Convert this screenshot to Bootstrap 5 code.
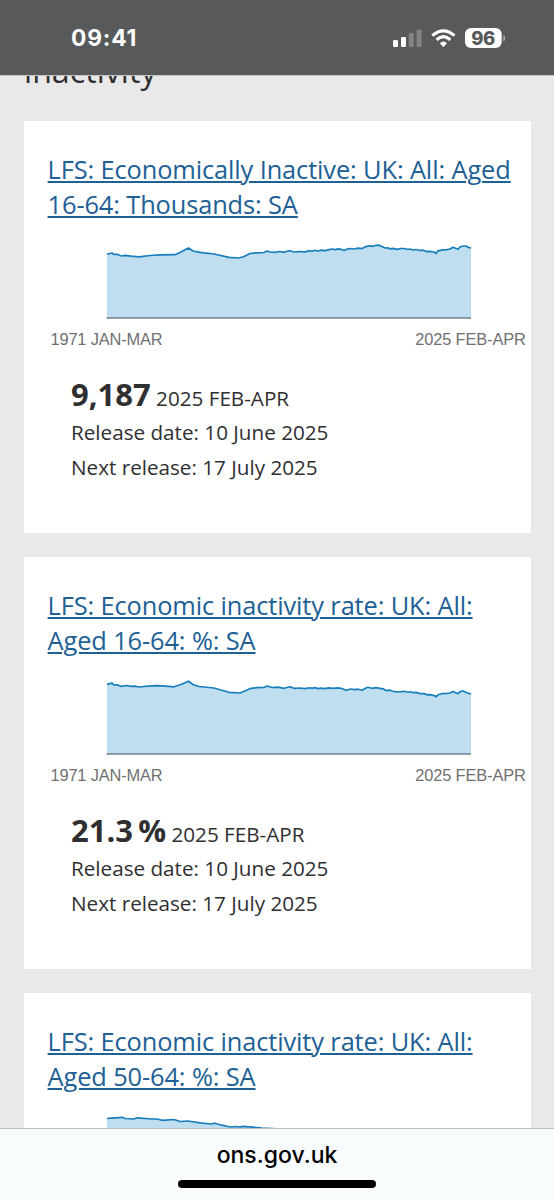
<!DOCTYPE html>
<html lang="en">
<head>
<meta charset="utf-8">
<meta name="viewport" content="width=device-width, initial-scale=1">
<title>ons.gov.uk</title>
<link href="https://cdn.jsdelivr.net/npm/bootstrap@5.3.0/dist/css/bootstrap.min.css" rel="stylesheet">
<style>
  body { background: #e9e9e9; color: #2f2f31; font-family: "Open Sans", "Noto Sans", sans-serif; }
  .status-bar { height: 75px; background: #58595b; padding: 0 49px 0 71px; font-family: Inter, sans-serif; }
  .clock { font-size: 22.8px; font-weight: 700; line-height: 75px; letter-spacing: .8px; }
  .page { border-top: 1px solid #c4c4c5; padding: 0 24px; min-height: 0; }
  .section-title { font-size: 32.2px; line-height: 40px; margin: -25px 0 30px; }
  .stat-card { height: 411.5px; margin: 0 -.5px 24.5px 0; padding-top: 31px; background: #fff; flex: none; }
  .stat-card h3 { font-size: 25.4px; letter-spacing: -.12px; line-height: 35px; padding: 0 10px 0 23.6px; margin: 0; font-weight: 400; }
  .stat-card a { color: #206095; text-decoration-thickness: 1.5px; text-underline-offset: 2px; }
  .stat-card svg { display: block; margin-top: 3px; }
  .axis-label { font: 16.4px "Liberation Sans", sans-serif; fill: #707071; }
  .facts { font-size: 20.66px; line-height: 35.3px; padding: 22px 0 0 47px; margin: 0; }
  .facts li:first-child { height: 38px; }
  .figure-value { font-size: 31px; font-weight: 700; }
  .browser-bar { height: 72px; background: #f8fcfd; border-top: 1px solid #b9bfc2; font-family: Inter, sans-serif; color: #000; }
  .address { font-size: 23px; font-weight: 500; line-height: 30px; margin-top: 11px; }
  .home-indicator { width: 198px; height: 8px; margin-top: 10px; background: #000; }
</style>
</head>
<body class="vh-100 overflow-hidden d-flex flex-column">
<header class="status-bar d-flex align-items-center justify-content-between text-white flex-shrink-0">
  <div class="clock">09:41</div>
  <svg width="113" height="24" viewBox="392 25 113 24" aria-hidden="true">
    <g fill="#fff">
      <rect x="393" y="39" width="5" height="7" rx="1.2"/>
      <rect x="401" y="36" width="5" height="10" rx="1.2"/>
      <g opacity=".25"><rect x="408.700" y="32" width="5" height="14" rx="1.2"/><rect x="416.600" y="28.500" width="5" height="17.500" rx="1.2"/></g>
      <path d="M440.200 42.200Q443.400 39.400 446.600 42.200L443.400 45.900Z" stroke="#fff" stroke-width=".5" stroke-linejoin="round"/>
      <rect x="465" y="27" width="36.700" height="20" rx="6"/>
      <path d="M503.300 34v6.600q2.100-1 2.100-3.300t-2.100-3.300Z" opacity=".5"/>
    </g>
    <g fill="none" stroke="#fff" stroke-width="3.200">
      <path d="M432.300 34.600Q443.400 25.200 454.500 34.600"/>
      <path d="M436.500 38.800Q443.400 32.600 450.300 38.800"/>
    </g>
    <text x="483.300" y="43.700" text-anchor="middle" font-family="Inter, sans-serif" font-size="18.500" font-weight="800" fill="#58595b" textLength="24">96</text>
  </svg>
</header>

<main class="page flex-grow-1 overflow-hidden d-flex flex-column">
  <h2 class="section-title flex-shrink-0 fw-normal">inactivity</h2>

  <article class="stat-card">
    <h3><a href="#">LFS: Economically Inactive: UK: All: Aged 16-64: Thousands: SA</a></h3>
    <svg width="506" height="130" viewBox="24 225 506 130" role="img">
      <path fill="#bfdeef" d="M107 318V254.300L112 253 114 254.500 117 254.200 121 256 125 255.300 131 256.200 139 256.800 150 255.500 160 254.800 175 254.700 180 252.500 188.500 248 193 251 200 252.300 214 254 229 257.300 239 258 244 256.500 250 253.500 264 252.500 267 251 275 252.300 279 251.500 284 252.200 290 250.700 294 252 305 251.500 315 250.500 325 250.300 333 249 338 249.200 344 250.500 350 248.500 362 248.200 369 245.800 379 245.200 385 248 397 249.200 404 248.500 413 250 420 250.500 430 252 434 252 436 253.500 438 250.800 443 249.800 450 249 453 247.200 458 249.200 463 246 466 246 471 248V318Z"/>
      <polyline fill="none" stroke="#187ebd" stroke-width="1.700" stroke-linejoin="round" points="107,254.300 112,253 114,254.500 117,254.200 121,256 125,255.300 131,256.200 139,256.800 150,255.500 160,254.800 175,254.700 180,252.500 188.500,248 193,251 200,252.300 214,254 229,257.300 239,258 244,256.500 250,253.500 257,252.800 264,252.500 267,251 270,252 275,252.300 279,251.500 284,252.200 288,251 290,250.700 294,252 299,251.500 305,251.800 310,250.700 312,251.200 315,250.300 318,251 321,250.200 325,250.600 329,249.600 333,249 335,249.800 338,248.900 341,249.300 344,250.500 347,249.200 350,248.500 354,249 358,248.200 362,248.600 366,246.600 369,245.800 373,246.300 376,245.300 379,245.200 382,246.600 385,248 388,247.800 390,248.900 393,248.400 397,249.400 401,248.500 404,248.500 408,249.500 410,249 413,250 416,249.500 420,250.500 423,250.200 427,251.600 430,251.400 434,252 436,253.500 438,250.800 443,249.800 447,249.700 450,249 453,247.200 458,249.200 460,247 463,246 466,246 468,247.300 471,248"/>
      <path stroke="#71808a" stroke-width="1.500" d="M106.500 317.900H471"/>
      <text class="axis-label" x="50.500" y="345.300" textLength="112">1971 JAN-MAR</text>
      <text class="axis-label" x="415.300" y="345.300" textLength="110.500">2025 FEB-APR</text>
    </svg>
    <ul class="facts list-unstyled">
      <li><span class="figure-value">9,187</span> 2025 FEB-APR</li>
      <li>Release date: 10 June 2025</li>
      <li>Next release: 17 July 2025</li>
    </ul>
  </article>

  <article class="stat-card">
    <h3><a href="#">LFS: Economic inactivity rate: UK: All: Aged 16-64: %: SA</a></h3>
    <svg width="506" height="130" viewBox="24 661 506 130" role="img">
      <path fill="#bfdeef" d="M107 754V684.300L112 683.200 114 685 117 684.800 121 686.300 127 685.500 139 687 157 685.700 174 686.800 181 684.500 188.500 681.200 193 684.500 199 686.500 214 688 229 692.300 240 693 246 690.500 251 688.300 264 687.500 267 686 272 687.500 284 688.300 290 686.800 294 688.300 305 688.700 314 687.800 325 688.700 333 688 342 688.500 346 690.300 351 689 362 690.300 368 687.300 380 688.300 386 690.500 398 692 404 691.300 413 692.700 424 694 435 695.800 436 696.800 438 694.800 447 693 450 693 453 691.500 458 693.700 463 691 471 694V754Z"/>
      <polyline fill="none" stroke="#187ebd" stroke-width="1.700" stroke-linejoin="round" points="107,684.300 112,683.200 114,685 117,684.800 121,686.300 127,685.500 131,686.400 135,686.200 139,687 148,686.200 157,685.700 166,686.200 174,686.800 181,684.500 188.500,681.200 193,684.500 199,686.500 214,688 229,692.300 240,693 246,690.500 251,688.300 257,687.700 264,687.500 267,686 272,687.500 278,687.200 284,688.300 290,686.800 294,688.300 299,688 305,688.700 310,687.800 312,688.400 315,687.600 318,688.600 321,688.100 325,688.700 329,687.800 333,688.300 338,687.900 342,688.500 346,690.300 351,689 355,689.600 358,689.200 362,690.300 366,688 368,687.300 372,688.300 376,687.600 380,688.300 383,688.800 386,690.500 390,690.200 393,691.300 398,692 404,691.300 408,692.300 410,691.700 413,692.700 416,692.400 420,693.600 424,693.600 427,694.800 430,694.600 435,695.800 436,696.800 438,694.800 442,693.700 447,693.400 450,693 453,691.500 458,693.700 460,691.700 463,691 467,692.800 471,694"/>
      <path stroke="#71808a" stroke-width="1.500" d="M106.500 753.900H471"/>
      <text class="axis-label" x="50.500" y="781.300" textLength="112">1971 JAN-MAR</text>
      <text class="axis-label" x="415.300" y="781.300" textLength="110.500">2025 FEB-APR</text>
    </svg>
    <ul class="facts list-unstyled">
      <li><span class="figure-value">21.3&#8201;%</span> 2025 FEB-APR</li>
      <li>Release date: 10 June 2025</li>
      <li>Next release: 17 July 2025</li>
    </ul>
  </article>

  <article class="stat-card">
    <h3><a href="#">LFS: Economic inactivity rate: UK: All: Aged 50-64: %: SA</a></h3>
    <svg width="506" height="130" viewBox="24 1097 506 130" role="img">
      <path fill="#bfdeef" d="M107 1190V1118.500L111 1118 113 1118.200 122 1117.300 125 1118.500 134 1119 137 1117.800 152 1119 157 1119 162 1120.300 174 1119.500 180 1121.500 188 1121 200 1122.800 211 1124 215 1123.200 222 1125.200 230 1127 236 1126.500 240 1127 243 1126.300 262 1128 471 1140V1190Z"/>
      <polyline fill="none" stroke="#187ebd" stroke-width="1.700" stroke-linejoin="round" points="107,1118.500 111,1118 113,1118.200 122,1117.300 125,1118.500 134,1119 137,1117.800 152,1119 157,1119 162,1120.300 174,1119.500 180,1121.500 188,1121 200,1122.800 211,1124 215,1123.200 222,1125.200 230,1127 236,1126.500 240,1127 243,1126.300 262,1128 471,1140"/>
    </svg>
  </article>
</main>

<footer class="browser-bar d-flex flex-column align-items-center flex-shrink-0">
  <div class="address">ons.gov.uk</div>
  <div class="home-indicator rounded-pill"></div>
</footer>
<script src="https://cdn.jsdelivr.net/npm/bootstrap@5.3.0/dist/js/bootstrap.bundle.min.js"></script>
</body>
</html>
